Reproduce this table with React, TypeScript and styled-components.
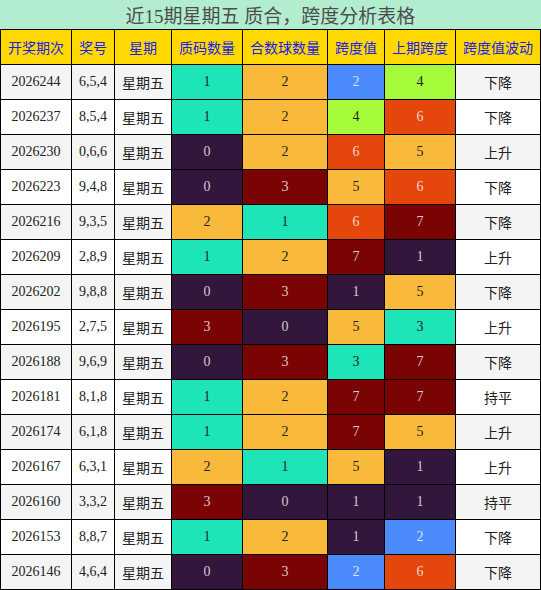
import styled, { createGlobalStyle } from "styled-components";

const GlobalStyle = createGlobalStyle`
  body {
    margin: 0;
    background: #ffffff;
  }
`;

const Wrapper = styled.div`
  width: 541px;
  font-family: "Liberation Serif", "Noto Sans CJK SC", serif;
`;

const Title = styled.div`
  height: 29px;
  background-color: #b3edd0;
  color: #4d4d4d;
  font-size: 19px;
  display: flex;
  align-items: center;
  justify-content: center;
`;

const Grid = styled.div`
  display: grid;
  grid-template-columns: 70px 42px 56px 70px 84px 56px 70px 84px;
  grid-auto-rows: 34px;
  gap: 1px;
  padding: 1px;
  background-color: #000000;
`;

const HeadCell = styled.div`
  background-color: #ffd800;
  color: #2121e6;
  font-size: 14px;
  display: flex;
  align-items: center;
  justify-content: center;
  white-space: nowrap;
`;

const Cell = styled.div<{ $bg: string; $fg: string }>`
  background-color: ${(p) => p.$bg};
  color: ${(p) => p.$fg};
  font-size: 14px;
  display: flex;
  align-items: center;
  justify-content: center;
  white-space: nowrap;
`;

const purple = "#33163c";
const teal = "#1de5b7";
const orange = "#f9b93b";
const darkRed = "#7a0404";
const blue = "#4a8afb";
const lime = "#a6fb3a";
const redOrange = "#e4460c";

const countColors: Record<number, string> = {
  0: purple,
  1: teal,
  2: orange,
  3: darkRed,
};

const spanColors: Record<number, string> = {
  1: purple,
  2: blue,
  3: teal,
  4: lime,
  5: orange,
  6: redOrange,
  7: darkRed,
};

const darkBgs = [purple, darkRed, blue, redOrange];

function textColor(bg: string) {
  return darkBgs.includes(bg) ? "rgba(255, 255, 255, 0.78)" : "#222222";
}

const headers = ["开奖期次", "奖号", "星期", "质码数量", "合数球数量", "跨度值", "上期跨度", "跨度值波动"];

const rows: [string, string, number, number, number, number, string][] = [
  ["2026244", "6,5,4", 1, 2, 2, 4, "下降"],
  ["2026237", "8,5,4", 1, 2, 4, 6, "下降"],
  ["2026230", "0,6,6", 0, 2, 6, 5, "上升"],
  ["2026223", "9,4,8", 0, 3, 5, 6, "下降"],
  ["2026216", "9,3,5", 2, 1, 6, 7, "下降"],
  ["2026209", "2,8,9", 1, 2, 7, 1, "上升"],
  ["2026202", "9,8,8", 0, 3, 1, 5, "下降"],
  ["2026195", "2,7,5", 3, 0, 5, 3, "上升"],
  ["2026188", "9,6,9", 0, 3, 3, 7, "下降"],
  ["2026181", "8,1,8", 1, 2, 7, 7, "持平"],
  ["2026174", "6,1,8", 1, 2, 7, 5, "上升"],
  ["2026167", "6,3,1", 2, 1, 5, 1, "上升"],
  ["2026160", "3,3,2", 3, 0, 1, 1, "持平"],
  ["2026153", "8,8,7", 1, 2, 1, 2, "下降"],
  ["2026146", "4,6,4", 0, 3, 2, 6, "下降"],
];

function App() {
  return (
    <Wrapper>
      <GlobalStyle />
      <Title>近15期星期五 质合，跨度分析表格</Title>
      <Grid>
        {headers.map((h) => (
          <HeadCell key={h}>{h}</HeadCell>
        ))}
        {rows.map((r, i) => {
          const plain = i % 2 === 0 ? "#f4f4f4" : "#ffffff";
          const colored = [countColors[r[2]], countColors[r[3]], spanColors[r[4]], spanColors[r[5]]];
          return [
            <Cell key={r[0] + "a"} $bg={plain} $fg="#222222">{r[0]}</Cell>,
            <Cell key={r[0] + "b"} $bg={plain} $fg="#222222">{r[1]}</Cell>,
            <Cell key={r[0] + "c"} $bg={plain} $fg="#222222">星期五</Cell>,
            ...colored.map((bg, j) => (
              <Cell key={r[0] + j} $bg={bg} $fg={textColor(bg)}>
                {r[2 + j]}
              </Cell>
            )),
            <Cell key={r[0] + "z"} $bg={plain} $fg="#222222">{r[6]}</Cell>,
          ];
        })}
      </Grid>
    </Wrapper>
  );
}

export default App;
